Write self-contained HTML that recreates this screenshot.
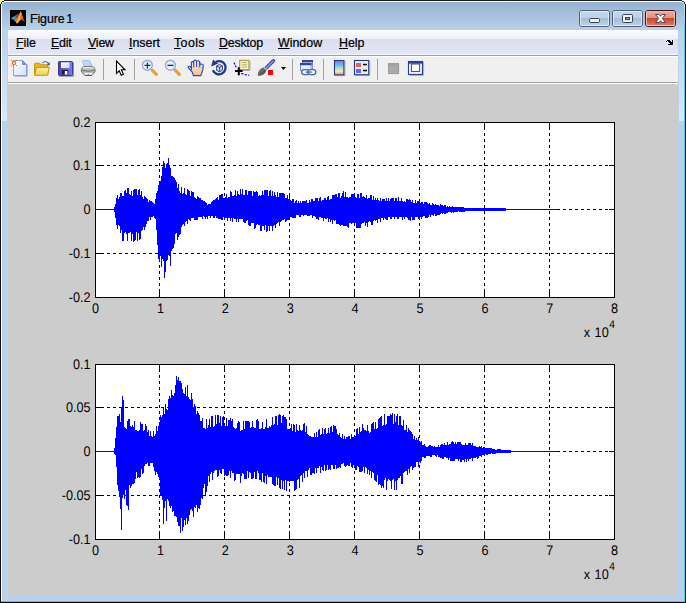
<!DOCTYPE html>
<html><head><meta charset="utf-8"><title>Figure 1</title>
<style>
html,body{margin:0;padding:0}
body{width:686px;height:603px;overflow:hidden;background:#000;position:relative;font-family:"Liberation Sans",sans-serif}
.abs{position:absolute}
#win{left:0;top:0;width:686px;height:603px;background:#b9d1ea}
#blk-l{left:0;top:0;width:1px;height:603px;background:#111}
#wht-l{left:1px;top:2px;width:1px;height:599px;background:#fdfeff}
#blk-t{left:0;top:0;width:686px;height:1px;background:#1c1c1c}
#wht-t{left:2px;top:1px;width:682px;height:1px;background:#fdfeff}
#blk-r{left:685px;top:0;width:1px;height:603px;background:#000}
#cy-r{left:684px;top:4px;width:1px;height:598px;background:linear-gradient(#c0eefb 0,#35d6f3 28px)}
#blk-b{left:0;top:602px;width:686px;height:1px;background:#000}
#cy-b{left:1px;top:601px;width:684px;height:1px;background:#35d6f3}
#cap{left:2px;top:2px;width:682px;height:28px;background:linear-gradient(#97b2cf,#b9d1ea)}
#title{-webkit-text-stroke:.22px #000;left:30px;top:11px;font-size:12.4px;line-height:16px;color:#000;white-space:nowrap;letter-spacing:-0.1px;word-spacing:-1.6px}
#menubar{left:8px;top:30px;width:670px;height:25px;background:linear-gradient(#fdfdff 0,#eceff8 9px,#dadeee 9px,#e3e6f4 24px,#f4f5fb 24px)}
#menubar .lt{left:0;top:9px;width:1px;height:16px;background:#eef0f9}
.mi{-webkit-text-stroke:.22px #000;top:35px;font-size:12.4px;line-height:16px;color:#000;white-space:nowrap}
.mi u{text-decoration:underline;text-underline-offset:1px}
#ln1{left:8px;top:55px;width:670px;height:1px;background:#a0a0a0}
#ln1w{left:8px;top:56px;width:670px;height:1px;background:#fff}
#tb{left:8px;top:57px;width:670px;height:25px;background:#f0f0f0}
#ln2{left:8px;top:82px;width:670px;height:1px;background:#a0a0a0}
#ln2w{left:8px;top:83px;width:670px;height:1px;background:#fff}
.sep{top:59px;width:1px;height:21px;background:#a0a0a0}
#figbg{left:8px;top:84px;width:670px;height:511px;background:#ccc}
svg.fig{position:absolute;left:8px;top:84px}
.tk text{font-family:"Liberation Sans",sans-serif;font-size:13.33px;fill:#000}
.tk text.sup{font-size:10.67px}
.cb{top:10px;width:29px;height:15px;border:1px solid #4d5f7a;border-radius:3px;box-sizing:content-box}
.cb i{position:absolute;left:0;top:0;right:0;bottom:0;border:1px solid rgba(255,255,255,.55);border-radius:2px;background:linear-gradient(#c3d6ea 0,#bdd1e7 6px,#a3bbd6 6px,#b9d0e9 13px)}
#bclose{border-color:#431422}
#bclose i{border-color:rgba(255,210,195,.75);background:linear-gradient(#e9ab9c 0,#df907e 6px,#c1432a 6px,#d97a63 13px)}
svg.ic{position:absolute;overflow:visible}
</style></head><body>
<div id="win" class="abs"></div>
<div id="cap" class="abs"></div>
<div id="blk-t" class="abs"></div><div id="wht-t" class="abs"></div>
<div id="blk-l" class="abs"></div><div id="wht-l" class="abs"></div>
<div id="cy-r" class="abs"></div><div id="blk-r" class="abs"></div>
<div id="cy-b" class="abs"></div><div id="blk-b" class="abs"></div>
<div class="abs" style="left:2px;top:24px;width:5px;height:97px;background:linear-gradient(rgba(255,255,255,0),rgba(255,255,255,.5))"></div>
<div class="abs" style="left:679px;top:24px;width:5px;height:97px;background:linear-gradient(rgba(255,255,255,0),rgba(255,255,255,.5))"></div>
<svg class="ic" style="left:0;top:0" width="686" height="5" viewBox="0 0 686 5" shape-rendering="crispEdges">
<path d="M0 0h4v1h-4zM0 1h2v1h-2zM0 2h1v2h-1z" fill="#ffffa6"/>
<path d="M2 1h2v1h-2zM1 2h1v2h-1z" fill="#222"/>
<path d="M2 2h2v1h-2zM2 3h1v1h-1z" fill="#f4f8fc"/>
<path d="M3 3h1v1h-1z" fill="#a9c2dc"/>
<path d="M682 0h4v1h-4zM684 1h2v1h-2zM685 2h1v2h-1z" fill="#fff"/>
<path d="M682 1h2v1h-2zM684 2h1v2h-1z" fill="#0c3a44"/>
<path d="M682 2h2v1h-2zM683 3h1v1h-1z" fill="#c4f0fc"/>
</svg>

<svg class="ic" style="left:10px;top:10px" width="16" height="16" viewBox="0 0 16 16">
<defs><linearGradient id="gml" x1="0" y1="0" x2="1" y2="1"><stop offset="0" stop-color="#f5c22c"/><stop offset=".45" stop-color="#ee7a1c"/><stop offset="1" stop-color="#b52a14"/></linearGradient>
<linearGradient id="gmb" x1="0" y1="0" x2="1" y2="0"><stop offset="0" stop-color="#3fb4d8"/><stop offset="1" stop-color="#2f6c9c"/></linearGradient></defs>
<rect width="16" height="16" fill="#000"/>
<path d="M1 8.2L5.4 5.6L8.6 3.6L7.4 8.4L4.4 10.4Z" fill="url(#gmb)"/>
<path d="M5.6 6.4L9.4 2.6L8.2 7.4L6.4 8.8Z" fill="#5b4a5a" opacity=".75"/>
<path d="M4.6 10.6Q8.4 7.4 10.4 1Q12 2.8 13 7Q14 10.6 15 12L12.6 10.4Q11.4 9 10.2 10.2Q8.4 12.4 6.8 13.8Q5.8 11.8 4.6 10.6Z" fill="url(#gml)"/>
<path d="M10.4 1.4Q10.8 5.4 10 9.4Q9 11.6 6.9 13.4Q6.6 12.6 6.2 12.2Q9.2 8.6 10.4 1.4Z" fill="#f8d23a" opacity=".85"/>
</svg>

<div id="title" class="abs">Figure 1</div>
<div id="bmin" class="abs cb" style="left:579px"><i></i></div>
<div id="bmax" class="abs cb" style="left:612px"><i></i></div>
<div id="bclose" class="abs cb" style="left:645px"><i></i></div>
<svg class="ic" style="left:576px;top:8px" width="104" height="22" viewBox="576 8 104 22">
<rect x="589.5" y="18.5" width="10" height="4" rx="1.2" fill="#f1f0ee" stroke="#3a4354" stroke-width="1"/>
<rect x="622.5" y="14.5" width="10" height="8" rx="1.2" fill="#f4f4f2" stroke="#3a4354" stroke-width="1"/>
<rect x="625.5" y="17.5" width="4" height="2" fill="#7f9cc4" stroke="#3a4354" stroke-width="1"/>
<path d="M655.5 14.5H659L660.5 16.2L662 14.5H665.5L662.3 18.5L665.5 22.5H662L660.5 20.8L659 22.5H655.5L658.7 18.5Z" fill="#fbfbfb" stroke="#4a4858" stroke-width="1" stroke-linejoin="round"/>
</svg>

<div id="menubar" class="abs"><div class="abs lt"></div></div>
<div class="abs mi" style="left:16px"><u>F</u>ile</div>
<div class="abs mi" style="left:51px;letter-spacing:-.2px"><u>E</u>dit</div>
<div class="abs mi" style="left:88px;letter-spacing:-.2px"><u>V</u>iew</div>
<div class="abs mi" style="left:129px"><u>I</u>nsert</div>
<div class="abs mi" style="left:174px;letter-spacing:.4px"><u>T</u>ools</div>
<div class="abs mi" style="left:219px;letter-spacing:-.22px"><u>D</u>esktop</div>
<div class="abs mi" style="left:278px"><u>W</u>indow</div>
<div class="abs mi" style="left:339px"><u>H</u>elp</div>
<svg class="ic" style="left:664px;top:38px" width="12" height="10" viewBox="664 38 12 10" shape-rendering="crispEdges">
<path d="M666 39h8v7h-7v-3h-2v-3h1z" fill="#eef1fb" opacity=".55"/>
<path d="M667 40h3v1h-3zM672 40h1v2h-1zM666 41h1v1h-1zM668 41h3v1h-3zM669 42h4v1h-4zM670 43h3v1h-3zM668 44h5v1h-5z" fill="#000"/>
</svg>

<div id="ln1" class="abs"></div><div id="ln1w" class="abs"></div>
<div id="tb" class="abs"></div>
<div id="ln2" class="abs"></div><div id="ln2w" class="abs"></div>
<div class="abs sep" style="left:103px"></div>
<div class="abs sep" style="left:134px"></div>
<div class="abs sep" style="left:292px"></div>
<div class="abs sep" style="left:323px"></div>
<div class="abs sep" style="left:377px"></div>
<svg class="ic" style="left:8px;top:57px" width="670" height="25" viewBox="8 57 670 25">
<defs>
<linearGradient id="gpg" x1="0" y1="0" x2="1" y2="1"><stop offset="0" stop-color="#fff"/><stop offset="1" stop-color="#cfe0fa"/></linearGradient>
<linearGradient id="gfo" x1="0" y1="0" x2="0" y2="1"><stop offset="0" stop-color="#fff3a8"/><stop offset="1" stop-color="#f6cc45"/></linearGradient>
<linearGradient id="gsv" x1="0" y1="0" x2="1" y2="0"><stop offset="0" stop-color="#4644b4"/><stop offset="1" stop-color="#7f7ee6"/></linearGradient>
<linearGradient id="gsl" x1="0" y1="0" x2="1" y2="1"><stop offset="0" stop-color="#fff"/><stop offset="1" stop-color="#c4d6f2"/></linearGradient>
<radialGradient id="gln" cx=".4" cy=".6" r=".7"><stop offset="0" stop-color="#fff"/><stop offset="1" stop-color="#bfe9f2"/></radialGradient>
<linearGradient id="ghd" x1="0" y1="0" x2="0" y2="1"><stop offset="0" stop-color="#fdeadb"/><stop offset="1" stop-color="#efc096"/></linearGradient>
<linearGradient id="gcb" x1="0" y1="0" x2="0" y2="1"><stop offset="0" stop-color="#8c78d8"/><stop offset=".3" stop-color="#6fb4f0"/><stop offset=".55" stop-color="#a4e4dc"/><stop offset=".75" stop-color="#f2f0a0"/><stop offset=".9" stop-color="#f2b48c"/><stop offset="1" stop-color="#e88ca8"/></linearGradient>
<linearGradient id="gbr" x1="0" y1="0" x2="1" y2="1"><stop offset="0" stop-color="#9a9a9a"/><stop offset="1" stop-color="#2c2c2c"/></linearGradient>
</defs>
<!-- new -->
<path d="M14.4 76H27V64.6" fill="none" stroke="#6a6c9c" stroke-width="1" opacity=".8"/>
<path d="M13.5 60.5H22.5L26.5 64.5V75.5H13.5Z" fill="url(#gpg)" stroke="#8199de" stroke-width=".9"/>
<path d="M22.5 60.5V64.5H26.5Z" fill="#8c96d4" stroke="#6f78b8" stroke-width=".7"/>
<g fill="#e8703a"><circle cx="13.9" cy="62.9" r="2.3"/><circle cx="11.2" cy="60.3" r=".6"/><circle cx="16.6" cy="60.3" r=".6"/><circle cx="11.2" cy="65.6" r=".6"/><circle cx="16.6" cy="65.6" r=".6"/></g>
<circle cx="13.9" cy="62.9" r="1.2" fill="#f6d848"/>
<!-- open -->
<path d="M42.4 63.2Q45.4 59.6 48.3 63.4" fill="none" stroke="#4a6cb4" stroke-width="1.05"/>
<path d="M49.7 62V65.4L46.6 64.8Z" fill="#35569e"/>
<path d="M34.5 74.5V64.3Q34.5 63.2 35.6 63.2H39.6L41.2 64.8H46.6Q47.8 64.8 47.8 66V74.5Z" fill="#e4b22e" stroke="#c4961a" stroke-width="1"/>
<path d="M36.6 67.5H49.3L47.6 75.3H34.6Z" fill="url(#gfo)" stroke="#c4961a" stroke-width="1"/>
<!-- save -->
<path d="M59.2 76.2H73.4V62.2" fill="none" stroke="#6a6c9c" stroke-width="1.1" opacity=".75"/>
<rect x="58.5" y="61.5" width="14" height="14" rx=".8" fill="url(#gsv)" stroke="#3a3896" stroke-width="1"/>
<rect x="61" y="62.3" width="8.6" height="5.8" fill="url(#gsl)"/>
<rect x="61.8" y="70" width="6.4" height="4.6" fill="#1c1c3c"/>
<rect x="64.8" y="71" width="2.6" height="3.6" fill="#f4f6ff"/>
<!-- print -->
<path d="M84.4 66.8L82.4 60.4H89.6L92.2 66.8Z" fill="url(#gsl)" stroke="#8fb4e4" stroke-width=".9"/>
<path d="M83.2 61H89.2L91.4 66.4H84.8Z" fill="#a9cdf6" opacity=".7"/>
<path d="M81.4 69.4Q81.4 67.4 84 66.5H92.2Q95.1 67.4 95.1 69.8V72L92.4 74.6H84L81.4 72Z" fill="#bdbdbd" stroke="#7e7e7e" stroke-width="1"/>
<path d="M83 68Q88 66.9 93.6 68.2" fill="none" stroke="#f2f2f2" stroke-width="1.1"/>
<path d="M81.8 70.2Q88 72.4 94.8 70.2" fill="none" stroke="#6c6c6c" stroke-width="1"/>
<path d="M83.2 72.2H93.4L92 75.2H84.8Z" fill="#fafafa" stroke="#8c8c8c" stroke-width=".7"/>
<path d="M84.8 75.5H92" stroke="#4c4c4c" stroke-width=".9"/>
<rect x="92.2" y="69.6" width="1.3" height="1.2" fill="#35c045"/>
<rect x="87.8" y="74.2" width="1.2" height="1" fill="#4060d0"/>
<!-- pointer -->
<path d="M116.5 61V73.4L119.2 70.8L121.2 75.2L123.4 74.2L121.4 69.8H125Z" fill="#fff" stroke="#000" stroke-width="1.1" stroke-linejoin="miter"/>
<!-- zoom in -->
<path d="M151.4 69.4L156.6 74.6" stroke="#7c84ac" stroke-width="2.6"/><path d="M152.8 70.8L156.4 74.4" stroke="#f0a224" stroke-width="3" stroke-linecap="round"/>
<circle cx="147.4" cy="65.3" r="5" fill="url(#gln)" stroke="#a2a6e2" stroke-width="1.4"/>
<path d="M144.4 65.4H150.4M147.4 62.4V68.4" stroke="#1c2a6b" stroke-width="1.3"/>
<!-- zoom out -->
<path d="M174.4 69.4L179.6 74.6" stroke="#7c84ac" stroke-width="2.6"/><path d="M175.8 70.8L179.4 74.4" stroke="#f0a224" stroke-width="3" stroke-linecap="round"/>
<circle cx="170.4" cy="65.3" r="5" fill="url(#gln)" stroke="#a2a6e2" stroke-width="1.4"/>
<path d="M167.4 65.4H173.4" stroke="#1c2a6b" stroke-width="1.4"/>
<!-- hand -->
<path d="M193.4 75.6L192.4 72.4L188.4 68Q187.6 66.2 189.6 66.3L191.4 67.8V62.4Q192.4 60.8 193.5 62.4L193.9 61Q195.1 59.2 196.4 61L196.9 61.4Q198.6 60 199.7 61.8L199.9 64.6Q201.9 63.2 203.3 65L202.7 70.4L200.8 75.6Z" fill="url(#ghd)" stroke="#2a4ccc" stroke-width="1.15"/>
<path d="M193.7 62.6V67.2M196.6 61.4V67M199.7 62.2V67.6M191.4 67.8V70" fill="none" stroke="#2a4ccc" stroke-width="1.1"/>
<!-- rotate -->
<path d="M216 61.8A6.6 6.6 0 1 1 212.9 70.2" fill="none" stroke="#1f3a8a" stroke-width="2.3"/>
<path d="M211.2 66.4L213 59.6L218.2 63.6Z" fill="#1f3a8a"/>
<path d="M216.6 66L219.4 64.4L222.4 65.8V70.2L219.6 71.8L216.6 70.4Z" fill="#c4d6f4" stroke="#1f3a8a" stroke-width=".9"/>
<path d="M216.6 66L219.6 67.4L222.4 65.8M219.6 67.4V71.8" fill="none" stroke="#1f3a8a" stroke-width=".9"/>
<!-- data cursor -->
<path d="M240.4 70.4H250V61" fill="none" stroke="#8a8a8a" stroke-width="1" opacity=".7"/>
<rect x="239.7" y="60.4" width="9.2" height="9.2" fill="#faf6c2" stroke="#a69e48" stroke-width="1.1"/>
<path d="M241.6 62.6H247M241.6 64.8H247M241.6 67H247" stroke="#b6ae70" stroke-width="1"/>
<path d="M234 62.6L236.8 68.6" stroke="#00f" stroke-width="1.2" stroke-dasharray="2 1.2"/>
<path d="M241.2 73.2Q245 75 249.2 75.2" fill="none" stroke="#00f" stroke-width="1.2" stroke-dasharray="2.4 1.2"/>
<path d="M235 71H242.6M238.8 67.2V75.2" stroke="#000" stroke-width="2"/>
<!-- brush -->
<path d="M273.4 60.8L265.4 68.8" stroke="#3444b0" stroke-width="3.6" stroke-linecap="round"/>
<path d="M273.2 61L266 68.2" stroke="#8e9cec" stroke-width="1.4" stroke-linecap="round"/>
<path d="M263.6 67.6L266.4 70.4" stroke="#d8dcf0" stroke-width="1.6"/>
<path d="M258.2 75.4Q258 70 263.2 67.8L266 70.6Q264.4 75.6 258.2 75.4Z" fill="url(#gbr)" stroke="#444" stroke-width=".6"/>
<rect x="267.4" y="69.4" width="6.2" height="6.2" fill="#fbeaea"/>
<rect x="268" y="70" width="5" height="5" fill="#f00"/>
<path d="M281 67H286L283.5 70Z" fill="#000"/>
<!-- link -->
<rect x="302.5" y="60.5" width="10" height="9" fill="#f4f7fd" stroke="#7088c8" stroke-width=".9"/>
<rect x="302" y="60" width="11" height="2.4" fill="#2f479e"/>
<rect x="300.5" y="63.5" width="10.6" height="7" fill="#e6eefb" stroke="#7088c8" stroke-width=".9"/>
<rect x="300" y="63" width="11.6" height="2.2" fill="#2f479e"/>
<rect x="301.6" y="69.6" width="7.8" height="5" rx="2.5" fill="#eef3fb" stroke="#4a68a8" stroke-width="1.3"/>
<rect x="308" y="69.6" width="7.8" height="5" rx="2.5" fill="#eef3fb" stroke="#4a68a8" stroke-width="1.3"/>
<path d="M305.6 72.1H311.8" stroke="#4a68a8" stroke-width="1.3"/>
<!-- colorbar -->
<path d="M335.4 75.6H345V61" fill="none" stroke="#8a8a8a" stroke-width="1" opacity=".6"/>
<rect x="334.5" y="60.5" width="9.4" height="14.4" fill="url(#gcb)" stroke="#283878" stroke-width="1.1"/>
<!-- legend -->
<path d="M355.4 75.6H369.8V61" fill="none" stroke="#8a8a8a" stroke-width="1" opacity=".6"/>
<rect x="354.5" y="60.5" width="14.2" height="14.2" fill="#e8eef8" stroke="#283878" stroke-width="1.1"/>
<rect x="356" y="63" width="5" height="4" fill="#e86060"/>
<rect x="356" y="69" width="5" height="4" fill="#6868e8"/>
<rect x="363" y="63.8" width="4" height="1.5" fill="#000"/>
<rect x="363" y="69.8" width="4" height="1.5" fill="#000"/>
<!-- gray square -->
<rect x="389.2" y="64.2" width="10" height="10" fill="#b4b4b4" opacity=".8"/>
<rect x="388.5" y="63.5" width="10" height="10" fill="#aaa" stroke="#9c9c9c" stroke-width="1"/>
<path d="M389 65H398" stroke="#9a9a9a" stroke-width="1"/>
<!-- plot tools -->
<path d="M409.4 75.4H423.6V62" fill="none" stroke="#8a8a8a" stroke-width="1" opacity=".6"/>
<rect x="408.5" y="61.5" width="14" height="13" fill="#dfe6f6" stroke="#2a3f8f" stroke-width="1.1"/>
<rect x="408" y="61" width="15" height="2.6" fill="#2a3f8f"/>
<rect x="411.4" y="64" width="8.2" height="7.4" fill="#fff" stroke="#2a3f8f" stroke-width=".9"/>
<path d="M409.8 64.4V71M421.2 64.4V71M409.6 72.8H421.6" stroke="#fff" stroke-width="1.2" stroke-dasharray="1 1"/>
</svg>

<div id="figbg" class="abs"></div>
<svg class="fig" width="670" height="511" viewBox="8 84 670 511" shape-rendering="crispEdges"><rect x="95" y="122" width="520" height="176" fill="#fff"/><path d="M95 165.5H615M95 209.5H615M95 253.5H615M159.5 298V122M224.5 298V122M289.5 298V122M354.5 298V122M419.5 298V122M484.5 298V122M549.5 298V122" stroke="#000" stroke-width="1" stroke-dasharray="3 3" fill="none"/><path d="M95 165.5h6M615 165.5h-6M95 209.5h6M615 209.5h-6M95 253.5h6M615 253.5h-6M159.5 298v-6M159.5 122v6M224.5 298v-6M224.5 122v6M289.5 298v-6M289.5 122v6M354.5 298v-6M354.5 122v6M419.5 298v-6M419.5 122v6M484.5 298v-6M484.5 122v6M549.5 298v-6M549.5 122v6" stroke="#000" stroke-width="1" fill="none"/><rect x="95.5" y="122.5" width="519" height="175" fill="none" stroke="#000" stroke-width="1"/><path d="M114.5 206.9V211.8M115.5 204.0V218.2M116.5 197.5V224.7M117.5 195.3V228.5M118.5 198.7V224.8M119.5 197.2V226.2M120.5 193.0V233.0M121.5 193.3V230.4M122.5 196.4V240.8M123.5 196.3V241.3M124.5 190.6V232.9M125.5 189.8V232.3M126.5 193.4V234.1M127.5 187.8V240.7M128.5 188.4V232.9M129.5 193.7V233.0M130.5 194.5V232.3M131.5 190.7V241.0M132.5 196.0V234.2M133.5 190.3V241.5M134.5 188.9V240.5M135.5 188.7V240.0M136.5 188.5V232.1M137.5 194.5V240.6M138.5 190.0V233.3M139.5 189.4V239.6M140.5 194.7V239.4M141.5 191.1V230.9M142.5 197.1V230.1M143.5 198.7V226.5M144.5 195.8V229.5M145.5 196.5V226.9M146.5 197.5V223.5M147.5 198.6V220.8M148.5 201.6V220.8M149.5 199.6V217.0M150.5 200.5V219.8M151.5 200.9V216.8M152.5 201.7V216.5M153.5 203.3V215.6M154.5 203.8V217.8M155.5 198.8V218.6M156.5 192.9V230.2M157.5 191.3V245.3M158.5 185.0V259.4M159.5 181.6V261.5M160.5 181.2V256.3M161.5 176.0V266.7M162.5 166.5V258.5M163.5 161V261.3M164.5 162.7V277.5M165.5 168.2V272M166.5 164.2V260.7M167.5 163.0V259.7M168.5 157.6V254.7M169.5 165.1V256.2M170.5 167.9V265.9M171.5 176.1V250.6M172.5 176.2V248.6M173.5 176.5V248.1M174.5 178.2V244.4M175.5 179.6V233.5M176.5 182.0V232.6M177.5 188.1V239.5M178.5 184.4V237.2M179.5 191.3V235.4M180.5 192.8V233.7M181.5 187.0V226.5M182.5 193.6V225.4M183.5 193.3V223.7M184.5 188.3V226.4M185.5 194.3V221.7M186.5 194.8V221.3M187.5 189.3V224.3M188.5 190.2V219.4M189.5 190.7V219.7M190.5 196.1V221.4M191.5 191.3V218.0M192.5 191.6V217.9M193.5 192.3V218.1M194.5 197.3V220.4M195.5 198.0V219.7M196.5 199.2V220.2M197.5 196.2V220.2M198.5 197.1V217.4M199.5 197.9V216.9M200.5 197.9V217.0M201.5 199.5V216.6M202.5 200.2V218.9M203.5 200.6V216.3M204.5 201.2V216.8M205.5 202.1V219.0M206.5 202.9V216.5M207.5 204.8V218.5M208.5 203.7V215.7M209.5 203.5V215.9M210.5 204.3V217.5M211.5 201.9V215.5M212.5 201.3V215.7M213.5 200.1V218.2M214.5 199.6V218.3M215.5 198.9V215.9M216.5 197.6V218.4M217.5 197.0V218.2M218.5 199.6V218.5M219.5 195.4V219.2M220.5 194.8V219.3M221.5 193.7V219.7M222.5 193.5V220.0M223.5 198.0V217.2M224.5 198.4V220.3M225.5 197.4V217.5M226.5 194.0V217.6M227.5 197.7V220.5M228.5 197.4V217.6M229.5 197.2V217.8M230.5 191.4V221.1M231.5 192.2V218.1M232.5 196.1V221.7M233.5 195.9V218.4M234.5 194.6V218.7M235.5 190.0V218.9M236.5 195.8V221.8M237.5 190.5V218.6M238.5 194.2V222.1M239.5 194.5V219.3M240.5 189.4V218.7M241.5 194.3V219.0M242.5 189.0V219.4M243.5 195.1V222.4M244.5 195.1V222.7M245.5 190.3V222.9M246.5 189.8V220.5M247.5 194.9V220.3M248.5 190.9V225.4M249.5 190.5V225.7M250.5 190.5V225.6M251.5 191.4V222.9M252.5 196.1V223.2M253.5 191.3V223.2M254.5 191.6V229.3M255.5 192.1V228.1M256.5 191.1V224.7M257.5 191.9V223.9M258.5 196.2V224.5M259.5 194.8V224.8M260.5 195.6V230.8M261.5 194.7V230.5M262.5 190.8V225.7M263.5 194.7V225.7M264.5 189.5V230.3M265.5 189.7V224.8M266.5 189.7V231.7M267.5 189.7V231.4M268.5 195.8V225.8M269.5 190.7V231.3M270.5 190.4V226.3M271.5 195.7V226.2M272.5 190.7V230.8M273.5 196.3V225.7M274.5 191.8V224.5M275.5 195.4V228.0M276.5 196.7V223.8M277.5 191.5V222.7M278.5 196.8V222.1M279.5 192.5V225.7M280.5 193.3V221.7M281.5 192.6V220.6M282.5 192.5V220.1M283.5 193.0V220.1M284.5 193.5V218.9M285.5 197.7V221.6M286.5 198.1V221.0M287.5 194.8V220.3M288.5 199.4V220.1M289.5 196.1V217.2M290.5 200.4V216.9M291.5 200.6V216.7M292.5 198.9V218.1M293.5 199.2V218.2M294.5 202.8V217.9M295.5 200.6V217.9M296.5 200.4V215.2M297.5 203.1V215.4M298.5 201.1V215.4M299.5 203.0V216.8M300.5 200.7V216.6M301.5 203.0V214.7M302.5 201.3V214.6M303.5 200.9V216.0M304.5 200.7V214.8M305.5 200.9V214.8M306.5 200.2V214.7M307.5 202.9V216.3M308.5 202.6V216.1M309.5 199.8V216.2M310.5 202.2V215.2M311.5 199.3V215.0M312.5 198.8V217.5M313.5 201.1V215.7M314.5 201.4V216.2M315.5 197.9V216.7M316.5 198.0V219.4M317.5 197.7V218.9M318.5 201.0V219.9M319.5 197.5V217.3M320.5 197.4V217.3M321.5 200.8V217.9M322.5 200.2V217.9M323.5 200.1V221.0M324.5 197.7V218.3M325.5 197.8V218.6M326.5 200.4V218.9M327.5 197.2V218.3M328.5 196.4V222.4M329.5 199.6V219.3M330.5 199.3V222.3M331.5 198.7V219.5M332.5 195.2V223.5M333.5 195.2V220.3M334.5 194.5V220.6M335.5 194.0V220.4M336.5 193.6V224.2M337.5 197.2V224.3M338.5 193.2V224.1M339.5 193.2V225.0M340.5 197.6V225.5M341.5 196.3V224.7M342.5 192.7V224.9M343.5 191.4V225.6M344.5 196.8V225.7M345.5 192.1V226.4M346.5 197.2V226.4M347.5 197.4V227.1M348.5 197.6V227.5M349.5 197.0V222.6M350.5 196.9V223.3M351.5 194.0V223.5M352.5 193.7V223.4M353.5 193.7V222.9M354.5 194.1V224.2M355.5 197.3V223.3M356.5 197.5V227.8M357.5 193.9V228.0M358.5 193.7V228.2M359.5 197.8V228.2M360.5 192.8V227.8M361.5 193.1V223.8M362.5 196.6V222.7M363.5 196.4V223.2M364.5 196.8V222.2M365.5 197.9V226.3M366.5 194.5V222.9M367.5 198.6V226.7M368.5 197.9V222.4M369.5 198.2V221.4M370.5 195.1V222.0M371.5 195.3V225.0M372.5 199.8V224.9M373.5 196.4V221.4M374.5 199.9V220.4M375.5 197.5V220.5M376.5 200.0V219.9M377.5 197.8V223.3M378.5 200.3V219.4M379.5 201.3V218.6M380.5 197.9V221.6M381.5 201.2V217.6M382.5 198.6V218.0M383.5 198.6V220.2M384.5 198.7V217.6M385.5 201.3V219.4M386.5 198.2V219.5M387.5 201.4V219.7M388.5 198.4V217.0M389.5 201.0V216.6M390.5 198.5V219.1M391.5 197.8V218.9M392.5 198.1V217.0M393.5 198.1V216.6M394.5 200.5V219.3M395.5 198.3V216.6M396.5 198.2V216.7M397.5 200.7V219.4M398.5 197.3V218.9M399.5 201.0V216.9M400.5 200.7V216.8M401.5 198.2V217.1M402.5 200.6V219.6M403.5 201.5V217.2M404.5 201.2V219.3M405.5 201.6V216.8M406.5 199.3V217.0M407.5 199.4V217.6M408.5 199.5V219.7M409.5 199.2V219.8M410.5 199.5V220.6M411.5 202.4V217.2M412.5 200.1V219.7M413.5 202.8V219.5M414.5 203.0V219.9M415.5 200.2V216.8M416.5 203.1V217.2M417.5 200.6V217.1M418.5 201.0V219.4M419.5 201.4V219.3M420.5 203.4V216.5M421.5 201.5V218.5M422.5 201.9V216.5M423.5 203.5V216.4M424.5 201.9V215.7M425.5 202.2V217.7M426.5 202.4V217.5M427.5 202.8V217.8M428.5 204.4V217.3M429.5 203.0V215.1M430.5 204.6V217.0M431.5 204.5V215.2M432.5 203.2V214.7M433.5 203.7V216.2M434.5 205.2V214.3M435.5 203.7V215.5M436.5 205.4V215.5M437.5 205.4V215.3M438.5 205.4V215.1M439.5 205.8V214.9M440.5 204.4V213.5M441.5 204.5V213.1M442.5 205.0V214.3M443.5 206.2V213.0M444.5 205.2V214.0M445.5 205.2V213.7M446.5 206.5V212.6M447.5 205.7V213.4M448.5 206.7V212.3M449.5 205.9V212.1M450.5 207.0V212.1M451.5 207.0V212.8M452.5 206.3V211.9M453.5 207.2V212.6M454.5 207.3V211.7M455.5 206.8V211.7M456.5 207.0V212.2M457.5 207.0V211.5M458.5 207.1V211.3M459.5 207.1V212.0M460.5 207.2V211.9M461.5 207.2V211.8M462.5 207.3V211.7M463.5 207.4V211.6M464.5 207.5V211.5M465.5 207.5V211.4M466.5 207.6V211.3M467.5 207.7V211.3M468.5 207.7V211.2M469.5 207.8V211.2M470.5 207.9V211.1M471.5 207.9V211.1M472.5 208.0V211.1M473.5 208.1V211.0M474.5 208.1V211.0M475.5 208.1V211.0M476.5 208.1V211.0M477.5 208.1V210.9M478.5 208.1V210.9M479.5 208.2V210.9M480.5 208.2V210.9M481.5 208.2V210.8M482.5 208.2V210.8M483.5 208.2V210.8M484.5 208.2V210.8M485.5 208.2V210.8M486.5 208.2V210.8M487.5 208.2V210.8M488.5 208.2V210.8M489.5 208.2V210.8M490.5 208.2V210.8M491.5 208.2V210.8M492.5 208.3V210.7M493.5 208.3V210.7M494.5 208.3V210.7M495.5 208.3V210.7M496.5 208.3V210.7M497.5 208.3V210.7M498.5 208.3V210.7M499.5 208.3V210.7M500.5 208.3V210.7M501.5 208.3V210.7M502.5 208.3V210.7M503.5 208.4V210.6M504.5 208.4V210.6M505.5 208.4V210.6M506.5 208.7V210.3M507.5 209.0V210.0M508.5 209.0V210.0M509.5 209.0V210.0M510.5 209.0V210.0M511.5 209.0V210.0M512.5 209.0V210.0M513.5 209.0V210.0M514.5 209.0V210.0M515.5 209.0V210.0M516.5 209.0V210.0M517.5 209.0V210.0M518.5 209.0V210.0M519.5 209.0V210.0M520.5 209.0V210.0M521.5 209.0V210.0M522.5 209.0V210.0M523.5 209.0V210.0M524.5 209.0V210.0M525.5 209.0V210.0M526.5 209.0V210.0M527.5 209.0V210.0M528.5 209.0V210.0M529.5 209.0V210.0M530.5 209.0V210.0M531.5 209.0V210.0M532.5 209.0V210.0M533.5 209.0V210.0M534.5 209.0V210.0M535.5 209.0V210.0M536.5 209.0V210.0M537.5 209.0V210.0M538.5 209.0V210.0M539.5 209.0V210.0M540.5 209.0V210.0M541.5 209.0V210.0M542.5 209.0V210.0M543.5 209.0V210.0M544.5 209.0V210.0M545.5 209.0V210.0M546.5 209.0V210.0M547.5 209.0V210.0M548.5 209.0V210.0M549.5 209.0V210.0M550.5 209.0V210.0M551.5 209.0V210.0M552.5 209.0V210.0M553.5 209.0V210.0M554.5 209.0V210.0M555.5 209.0V210.0M556.5 209.0V210.0" stroke="#00f" stroke-width="1" fill="none"/><path d="M96 209.5H557" stroke="#00f" stroke-width="1"/><rect x="95" y="364" width="520" height="176" fill="#fff"/><path d="M95 407.5H615M95 451.5H615M95 495.5H615M159.5 540V364M224.5 540V364M289.5 540V364M354.5 540V364M419.5 540V364M484.5 540V364M549.5 540V364" stroke="#000" stroke-width="1" stroke-dasharray="3 3" fill="none"/><path d="M95 407.5h6M615 407.5h-6M95 451.5h6M615 451.5h-6M95 495.5h6M615 495.5h-6M159.5 540v-6M159.5 364v6M224.5 540v-6M224.5 364v6M289.5 540v-6M289.5 364v6M354.5 540v-6M354.5 364v6M419.5 540v-6M419.5 364v6M484.5 540v-6M484.5 364v6M549.5 540v-6M549.5 364v6" stroke="#000" stroke-width="1" fill="none"/><rect x="95.5" y="364.5" width="519" height="175" fill="none" stroke="#000" stroke-width="1"/><path d="M114.5 447.8V453.5M115.5 438.1V454.8M116.5 426.7V467.4M117.5 416.2V484.9M118.5 415.7V491.3M119.5 413.7V496.7M120.5 422.0V508.5M121.5 407.1V529.5M122.5 395.5V498.0M123.5 400V494.7M124.5 427.3V498.6M125.5 428.1V489.5M126.5 428.6V505M127.5 420.6V506.1M128.5 419.3V510M129.5 418.7V485.1M130.5 426.3V487.7M131.5 426.6V485.7M132.5 425.4V483.8M133.5 426.9V484.4M134.5 421.4V482.7M135.5 429.8V479.3M136.5 430.2V471.5M137.5 430.5V478.0M138.5 430.5V476.9M139.5 429.6V477.8M140.5 422.2V477.0M141.5 423.5V468.9M142.5 424.4V474.0M143.5 431.2V472.6M144.5 429.6V465.8M145.5 423.8V464.2M146.5 425.8V463.8M147.5 432.2V462.9M148.5 430.1V465.9M149.5 436.3V465.7M150.5 431.1V462.6M151.5 436.1V462.9M152.5 437.3V462.6M153.5 431.4V467.3M154.5 435.8V470.7M155.5 434.2V475.1M156.5 426.1V471.5M157.5 430.6V474.1M158.5 426.2V476.9M159.5 421.8V480.2M160.5 414.7V496.1M161.5 416.6V494.7M162.5 415.0V499.6M163.5 407.7V524M164.5 413.5V508.1M165.5 404.1V500.6M166.5 409.3V521M167.5 410.4V498.8M168.5 399.4V500.5M169.5 396.1V506.2M170.5 397.6V507.5M171.5 390.2V506.3M172.5 394.7V512.2M173.5 396.3V511.3M174.5 393.2V515.6M175.5 384.7V515.8M176.5 375.5V517.4M177.5 380.4V522.1M178.5 377V525.7M179.5 380.8V526.2M180.5 381.1V533M181.5 383.1V518.3M182.5 388.7V531M183.5 393.2V527.0M184.5 394.0V520.0M185.5 387.4V524.8M186.5 395.5V518.4M187.5 385.2V523.5M188.5 396.5V521.0M189.5 398.6V515.2M190.5 400.4V509.7M191.5 392.9V509.0M192.5 398.6V511.1M193.5 406.5V516.8M194.5 403.6V507.4M195.5 406.4V507.5M196.5 414.2V504.7M197.5 410.6V511.5M198.5 413.3V508.1M199.5 415.2V508.9M200.5 420.8V504.5M201.5 421.1V498.1M202.5 418.0V498.8M203.5 427.8V487.8M204.5 428.2V484.3M205.5 429.1V494.9M206.5 418.7V491.5M207.5 427.9V485.6M208.5 425.3V476.0M209.5 419.1V481.8M210.5 427.2V474.1M211.5 416.3V472.2M212.5 415.7V480.2M213.5 426.5V473.3M214.5 425.8V470.7M215.5 415.2V470.3M216.5 424.3V470.2M217.5 415.3V477.1M218.5 414.6V476.3M219.5 422.9V469.6M220.5 416.4V473.3M221.5 425.6V474.4M222.5 417.3V468.6M223.5 416.1V469.0M224.5 424.6V475.8M225.5 426.1V474.5M226.5 417.8V475.9M227.5 426.1V476.0M228.5 419.6V475.4M229.5 419.8V471.2M230.5 418.3V478.0M231.5 420.5V470.5M232.5 418.9V472.7M233.5 427.2V473.1M234.5 427.7V480.5M235.5 428.5V480.0M236.5 428.2V474.0M237.5 422.5V474.2M238.5 421.3V473.9M239.5 422.1V473.7M240.5 430.5V483.3M241.5 430.1V475.6M242.5 429.6V473.1M243.5 421.2V473.5M244.5 428.7V479.2M245.5 420.6V479.0M246.5 421.0V478.5M247.5 421.3V470.8M248.5 421.1V477.7M249.5 421.5V471.6M250.5 428.2V472.5M251.5 427.3V479.0M252.5 421.0V478.9M253.5 427.1V477.8M254.5 427.8V472.2M255.5 428.2V478.7M256.5 420.0V479.3M257.5 419.3V471.4M258.5 420.6V473.3M259.5 429.4V480.3M260.5 428.5V479.6M261.5 428.2V481.6M262.5 422.4V473.3M263.5 429.2V482.1M264.5 429.1V482.6M265.5 427.3V476.1M266.5 419.3V484.1M267.5 427.6V475.2M268.5 427.5V477.0M269.5 425.5V476.6M270.5 427.0V476.8M271.5 425.4V476.9M272.5 417.2V484.4M273.5 425.2V484.9M274.5 423.9V486.0M275.5 415.5V485.9M276.5 415.6V476.7M277.5 424.6V485.1M278.5 415.2V478.0M279.5 414.2V487.5M280.5 415.2V488.9M281.5 423.1V480.1M282.5 416.4V489.4M283.5 414.7V481.0M284.5 416.8V489.9M285.5 417.4V480.4M286.5 418.8V490.6M287.5 428.8V481.4M288.5 429.0V481.4M289.5 429.4V482.4M290.5 428.3V480.8M291.5 423.9V481.2M292.5 431.2V481.2M293.5 423.9V481.4M294.5 424.8V490.8M295.5 432.0V489.8M296.5 423.9V488.6M297.5 430.0V479.5M298.5 431.4V479.3M299.5 424.5V487.9M300.5 430.4V476.0M301.5 431.4V475.4M302.5 429.9V481.5M303.5 424.1V473.0M304.5 422.6V478.3M305.5 431.9V471.2M306.5 426.2V470.9M307.5 434.0V476.6M308.5 435.2V470.3M309.5 436.1V468.1M310.5 436.1V474.9M311.5 436.6V474.9M312.5 437.1V473.1M313.5 436.6V473.3M314.5 433.4V473.9M315.5 437.3V468.4M316.5 431.9V472.7M317.5 437.0V467.5M318.5 429.9V467.8M319.5 429.3V466.4M320.5 435.3V472.5M321.5 434.0V466.6M322.5 427.8V470.4M323.5 433.6V471.1M324.5 428.7V465.3M325.5 427.9V471.3M326.5 434.1V469.8M327.5 433.0V464.9M328.5 428.1V470.2M329.5 432.5V469.3M330.5 427.4V470.1M331.5 425.9V465.3M332.5 431.8V465.0M333.5 425.2V468.5M334.5 425.7V469.1M335.5 426.4V464.6M336.5 428.8V468.8M337.5 434.4V467.8M338.5 435.3V467.8M339.5 432.6V467.4M340.5 437.2V468.3M341.5 438.1V463.5M342.5 434.3V463.8M343.5 438.6V463.1M344.5 435.7V466.3M345.5 439.4V466.7M346.5 436.6V465.6M347.5 436.5V465.4M348.5 435.6V465.9M349.5 435.7V466.3M350.5 439.1V462.5M351.5 433.5V467.1M352.5 437.4V467.7M353.5 436.6V464.5M354.5 435.8V468.4M355.5 436.0V470.2M356.5 428.9V470.2M357.5 428.1V466.2M358.5 433.6V466.5M359.5 426.8V472.1M360.5 432.4V472.3M361.5 431.2V472.2M362.5 423.7V471.3M363.5 428.2V467.3M364.5 429.9V473.3M365.5 429.6V467.4M366.5 431.3V468.2M367.5 425.0V474.0M368.5 431.2V469.6M369.5 432.7V475.2M370.5 431.8V470.8M371.5 423.9V478.4M372.5 422.6V471.7M373.5 422.1V473.1M374.5 429.0V480.1M375.5 421.5V481.0M376.5 428.9V482.0M377.5 427.7V474.5M378.5 418.6V484.7M379.5 417.9V484.0M380.5 416.7V485.4M381.5 416.0V487.5M382.5 425.7V486.1M383.5 424.6V487.5M384.5 414.3V480.4M385.5 424.6V478.0M386.5 423.5V489.9M387.5 416.0V480.5M388.5 415.6V478.9M389.5 416.1V479.7M390.5 414.2V481.1M391.5 415.1V488.9M392.5 413.4V479.9M393.5 424.3V478.8M394.5 414.4V490.0M395.5 422.2V480.8M396.5 415.6V490.3M397.5 413.7V480.3M398.5 425.2V478.3M399.5 416.1V477.6M400.5 415.9V475.8M401.5 424.6V484.0M402.5 426.4V483.5M403.5 420.2V472.7M404.5 430.4V472.3M405.5 429.6V471.3M406.5 425.4V470.5M407.5 432.4V474.8M408.5 427.5V468.8M409.5 429.8V473.0M410.5 431.0V467.0M411.5 431.8V465.9M412.5 434.1V470.1M413.5 438.6V468.2M414.5 436.0V467.1M415.5 440.2V466.5M416.5 438.1V461.7M417.5 440.4V462.0M418.5 437.3V466.7M419.5 441.5V462.0M420.5 442.2V463.1M421.5 441.4V461.3M422.5 444.9V457.4M423.5 445.4V456.9M424.5 443.9V458.3M425.5 446.2V458.0M426.5 446.6V456.2M427.5 446.5V455.5M428.5 445.5V455.7M429.5 445.3V455.5M430.5 445.2V456.6M431.5 445.6V456.6M432.5 445.5V455.3M433.5 447.3V455.4M434.5 445.6V455.0M435.5 447.0V456.3M436.5 447.0V456.7M437.5 447.0V455.4M438.5 445.3V456.7M439.5 446.6V457.1M440.5 444.9V457.5M441.5 444.4V458.2M442.5 444.2V458.6M443.5 445.2V458.9M444.5 442.9V457.1M445.5 444.5V457.4M446.5 444.9V457.6M447.5 442.2V457.6M448.5 444.6V459.9M449.5 444.4V458.2M450.5 444.2V460.5M451.5 442.1V460.6M452.5 441.4V460.9M453.5 442.0V460.9M454.5 444.0V461.3M455.5 441.7V458.7M456.5 444.2V458.8M457.5 441.7V458.6M458.5 442.2V461.3M459.5 442.1V459.4M460.5 441.8V462.0M461.5 444.3V462.0M462.5 444.9V459.5M463.5 445.0V459.6M464.5 445.0V462.1M465.5 442.7V459.1M466.5 444.7V461.6M467.5 444.9V459.3M468.5 443.0V461.3M469.5 443.2V459.0M470.5 443.0V458.6M471.5 445.2V458.3M472.5 443.4V460.8M473.5 445.5V458.2M474.5 445.9V457.9M475.5 446.0V457.8M476.5 446.5V457.4M477.5 446.8V458.8M478.5 447.0V458.4M479.5 445.6V456.2M480.5 447.1V455.9M481.5 445.9V456.8M482.5 447.5V455.2M483.5 446.5V454.7M484.5 446.7V454.7M485.5 448.2V454.3M486.5 448.4V454.7M487.5 447.7V454.5M488.5 447.9V454.4M489.5 448.1V453.6M490.5 448.1V454.1M491.5 448.2V453.3M492.5 448.6V453.9M493.5 448.6V453.7M494.5 448.8V453.6M495.5 449.5V453.5M496.5 449.7V453.4M497.5 449.0V453.3M498.5 449.2V453.3M499.5 449.3V453.2M500.5 449.4V453.1M501.5 449.6V453.0M502.5 449.7V453.0M503.5 449.8V452.9M504.5 449.9V452.9M505.5 449.9V452.8M506.5 450.0V452.8M507.5 450.1V452.7M508.5 450.2V452.7M509.5 450.3V452.6M510.5 450.4V452.6M511.5 451.0V452.0M512.5 451.0V452.0M513.5 451.0V452.0M514.5 451.0V452.0M515.5 451.0V452.0M516.5 451.0V452.0M517.5 451.0V452.0M518.5 451.0V452.0M519.5 451.0V452.0M520.5 451.0V452.0M521.5 451.0V452.0M522.5 451.0V452.0M523.5 451.0V452.0M524.5 451.0V452.0M525.5 451.0V452.0M526.5 451.0V452.0M527.5 451.0V452.0M528.5 451.0V452.0M529.5 451.0V452.0M530.5 451.0V452.0M531.5 451.0V452.0M532.5 451.0V452.0M533.5 451.0V452.0M534.5 451.0V452.0M535.5 451.0V452.0M536.5 451.0V452.0M537.5 451.0V452.0M538.5 451.0V452.0M539.5 451.0V452.0M540.5 451.0V452.0M541.5 451.0V452.0M542.5 451.0V452.0M543.5 451.0V452.0M544.5 451.0V452.0M545.5 451.0V452.0M546.5 451.0V452.0M547.5 451.0V452.0M548.5 451.0V452.0M549.5 451.0V452.0M550.5 451.0V452.0M551.5 451.0V452.0M552.5 451.0V452.0M553.5 451.0V452.0M554.5 451.0V452.0M555.5 451.0V452.0M556.5 451.0V452.0M557.5 451.0V452.0" stroke="#00f" stroke-width="1" fill="none"/><path d="M96 451.5H558" stroke="#00f" stroke-width="1"/><g class="tk" text-rendering="geometricPrecision"><text transform="translate(90.6 126.50) scale(.95 1.04)" text-anchor="end">0.2</text><text transform="translate(90.6 170.25) scale(.95 1.04)" text-anchor="end">0.1</text><text transform="translate(90.6 214.00) scale(.95 1.04)" text-anchor="end">0</text><text transform="translate(90.6 257.75) scale(.95 1.04)" text-anchor="end">-0.1</text><text transform="translate(90.6 301.50) scale(.95 1.04)" text-anchor="end">-0.2</text><text transform="translate(90.6 368.50) scale(.95 1.04)" text-anchor="end">0.1</text><text transform="translate(90.6 412.25) scale(.95 1.04)" text-anchor="end">0.05</text><text transform="translate(90.6 456.00) scale(.95 1.04)" text-anchor="end">0</text><text transform="translate(90.6 499.75) scale(.95 1.04)" text-anchor="end">-0.05</text><text transform="translate(90.6 543.50) scale(.95 1.04)" text-anchor="end">-0.1</text><text transform="translate(95.6 313.2) scale(.95 1.04)" text-anchor="middle">0</text><text transform="translate(160.5 313.2) scale(.95 1.04)" text-anchor="middle">1</text><text transform="translate(225.3 313.2) scale(.95 1.04)" text-anchor="middle">2</text><text transform="translate(290.2 313.2) scale(.95 1.04)" text-anchor="middle">3</text><text transform="translate(355.1 313.2) scale(.95 1.04)" text-anchor="middle">4</text><text transform="translate(420.0 313.2) scale(.95 1.04)" text-anchor="middle">5</text><text transform="translate(484.9 313.2) scale(.95 1.04)" text-anchor="middle">6</text><text transform="translate(549.7 313.2) scale(.95 1.04)" text-anchor="middle">7</text><text transform="translate(614.6 313.2) scale(.95 1.04)" text-anchor="middle">8</text><text transform="translate(95.6 555.2) scale(.95 1.04)" text-anchor="middle">0</text><text transform="translate(160.5 555.2) scale(.95 1.04)" text-anchor="middle">1</text><text transform="translate(225.3 555.2) scale(.95 1.04)" text-anchor="middle">2</text><text transform="translate(290.2 555.2) scale(.95 1.04)" text-anchor="middle">3</text><text transform="translate(355.1 555.2) scale(.95 1.04)" text-anchor="middle">4</text><text transform="translate(420.0 555.2) scale(.95 1.04)" text-anchor="middle">5</text><text transform="translate(484.9 555.2) scale(.95 1.04)" text-anchor="middle">6</text><text transform="translate(549.7 555.2) scale(.95 1.04)" text-anchor="middle">7</text><text transform="translate(614.6 555.2) scale(.95 1.04)" text-anchor="middle">8</text><text transform="translate(583.8 336.6) scale(.95 1.04)">x</text><text transform="translate(594.6 336.6) scale(.95 1.04)">10</text><text class="sup" transform="translate(609.2 328.2) scale(.95 1.04)">4</text><text transform="translate(583.8 578.6) scale(.95 1.04)">x</text><text transform="translate(594.6 578.6) scale(.95 1.04)">10</text><text class="sup" transform="translate(609.2 570.2) scale(.95 1.04)">4</text></g></svg>
</body></html>
